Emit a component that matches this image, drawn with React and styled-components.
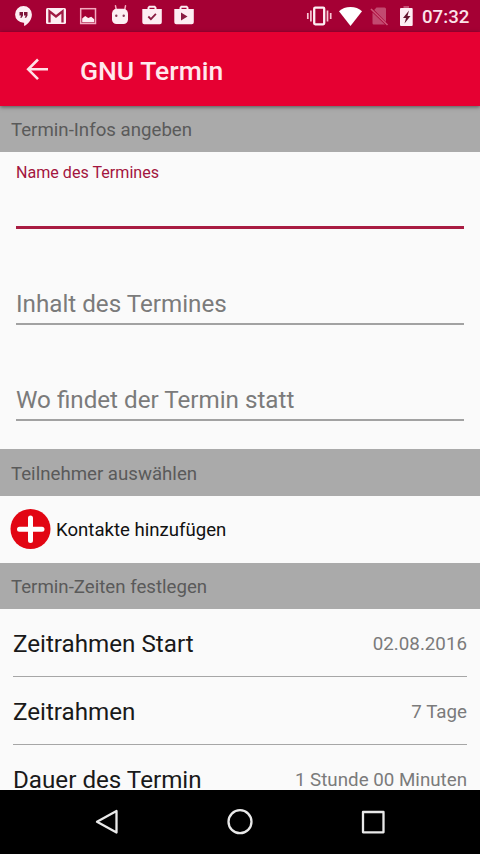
import React from "react";
import styled, { createGlobalStyle } from "styled-components";

const GlobalStyle = createGlobalStyle`
  *, *::before, *::after { box-sizing: border-box; }
  body { margin: 0; background: #000; font-family: Roboto, "Noto Sans", sans-serif; }
`;

const Screen = styled.div`
  display: flex;
  flex-direction: column;
  width: 480px;
  height: 854px;
  overflow: hidden;
  background: #fafafa;
`;

const StatusBar = styled.div`
  display: flex;
  flex: none;
  justify-content: space-between;
  height: 32px;
  padding: 0 11px 0 8px;
  background: #a50034;
`;

const IconGroup = styled.div`
  display: flex;
  align-items: center;
`;

const StatusSvg = styled.svg`
  display: block;
  flex: none;
  fill: #fdeef3;
`;

const Clock = styled.span`
  width: 47px;
  margin-left: 6px;
  padding-top: 1px;
  font-size: 18.67px;
  font-weight: 500;
  line-height: 32px;
  white-space: nowrap;
  color: #fbe3ea;
`;

const AppBar = styled.header`
  display: flex;
  flex: none;
  align-items: center;
  gap: 29px;
  height: 74px;
  padding: 0 24px;
  background: #e60032;
  box-shadow: 0 1px 4px rgba(0, 0, 0, 0.5);
  z-index: 1;
`;

const Title = styled.h1`
  margin: 0;
  padding-top: 4px;
  font-size: 26.5px;
  font-weight: 500;
  line-height: 36px;
  color: #ffe9ed;
`;

const Content = styled.main`
  flex: 1;
  min-height: 0;
  overflow: hidden;
`;

const SectionHeader = styled.h2`
  height: ${(p) => p.$height}px;
  margin: 0;
  padding: ${(p) => p.$top}px 11px 0;
  font-size: 18.67px;
  font-weight: 400;
  line-height: 24px;
  color: #5a5a5a;
  background: #aaa;
`;

const Form = styled.div`
  height: 297px;
  padding: 10px 16px 0;
`;

const Field = styled.label`
  display: flex;
  flex-direction: column;
  justify-content: ${(p) => (p.$active ? "space-between" : "flex-end")};
  height: ${(p) => p.$height}px;
  border-bottom: ${(p) => (p.$active ? "3px solid #a91c42" : "2px solid #a2a2a2")};
`;

const FloatingLabel = styled.span`
  padding-top: 1px;
  font-size: 16.1px;
  line-height: 20px;
  color: #a3153e;
`;

const Hint = styled.span`
  margin-bottom: 5px;
  font-size: 24.2px;
  line-height: 28px;
  color: #7b7b7b;
`;

const ContactRow = styled.div`
  display: flex;
  align-items: center;
  gap: 5px;
  height: 67px;
  padding: 0 10px;
  font-size: 18.6px;
  color: #111;
`;

const SettingList = styled.div`
  padding: 0 13px;
`;

const SettingRow = styled.div`
  display: flex;
  align-items: center;
  justify-content: space-between;
  height: 68px;
  padding-top: 3px;
  border-bottom: 1px solid #a6a6a6;
`;

const SettingName = styled.span`
  font-size: 24.2px;
  line-height: 32px;
  color: #191919;
`;

const SettingValue = styled.span`
  font-size: 18.75px;
  line-height: 28px;
  color: #7b7b7b;
`;

const NavBar = styled.nav`
  display: flex;
  flex: none;
  align-items: center;
  justify-content: center;
  gap: 93px;
  height: 64px;
  background: #000;
`;

const NavSvg = styled.svg`
  display: block;
  fill: none;
  stroke: #e9e9e9;
  stroke-width: 2.3;
  stroke-linejoin: round;
`;

const StatusIcon = ({ x, width = 32, children }) => (
  <StatusSvg width={width} height="32" viewBox={`${x} 0 ${width} 32`}>
    {children}
  </StatusSvg>
);

const settings = [
  ["Zeitrahmen Start", "02.08.2016"],
  ["Zeitrahmen", "7 Tage"],
  ["Dauer des Termin", "1 Stunde 00 Minuten"],
];

export default function App() {
  return (
    <Screen>
      <GlobalStyle />
      <StatusBar>
        <IconGroup>
          <StatusIcon x={8}>
            <path d="M23.5 6a8.4 8.4 0 0 0 0 16.8h.6V26c4.5-2.2 7.8-6.700 7.800-11.600A8.400 8.400 0 0 0 23.500 6z" />
            <path fill="#7d1238" d="M19.500 12h3.500v3.500l-1.300 2.300h-1.500l1-2.300h-1.700zm4.500 0h3.500v3.500l-1.300 2.300h-1.500l1-2.300H24z" />
          </StatusIcon>
          <StatusIcon x={40}>
            <rect x="46" y="8" width="20" height="16" rx="1.500" />
            <path d="M49.500 22.500V11.300l6.500 5.200 6.500-5.200v11.200" fill="none" stroke="#a11a43" strokeWidth="2.300" />
          </StatusIcon>
          <StatusIcon x={72}>
            <rect x="80.700" y="8.700" width="14.800" height="14.800" fill="none" stroke="#f3a9bf" strokeWidth="1.500" />
            <path d="M82.200 22.200v-3.700l3-2.500 3 2 3-1.200 3 2.400v3z" />
          </StatusIcon>
          <StatusIcon x={104}>
            <path d="M115.500 5.800l.8 4M125.500 5.800l-.8 4" stroke="#f3a9bf" strokeWidth="1.500" strokeLinecap="round" />
            <path d="M112 13.500a4.700 4.700 0 0 1 4.700-4.700h6.600a4.700 4.700 0 0 1 4.700 4.700v6a4.500 4.500 0 0 1-4.500 4.500h-7a4.500 4.500 0 0 1-4.500-4.500z" />
            <circle cx="116.300" cy="15.700" r="1.200" fill="#8b3a59" />
            <circle cx="123.700" cy="15.700" r="1.200" fill="#8b3a59" />
          </StatusIcon>
          <StatusIcon x={136}>
            <path fillRule="evenodd" d="M142.300 9h5.200V7.500l1.500-1.700h6l1.500 1.700V9h5.300v13.200a2 2 0 0 1-2 2h-15.500a2 2 0 0 1-2-2zM149.500 7.800V9h5V7.800z" />
            <path d="M148.300 16.500l2.600 2.600 5-5.300" fill="none" stroke="#891d43" strokeWidth="1.800" />
          </StatusIcon>
          <StatusIcon x={168}>
            <path fillRule="evenodd" d="M174.300 9h5.200V7.500l1.500-1.700h6l1.500 1.700V9h5.300v13.200a2 2 0 0 1-2 2h-15.500a2 2 0 0 1-2-2zM181.500 7.800V9h5V7.800z" />
            <path d="M181 12.500v8l6.500-4z" fill="#891d43" />
          </StatusIcon>
        </IconGroup>
        <IconGroup>
          <StatusIcon x={304}>
            <rect x="314.200" y="7.700" width="10" height="16.600" rx="1" fill="none" stroke="#fdeef3" strokeWidth="2.300" />
            <path d="M307.800 13v6M310.900 10.500v11M327.500 10.500v11M330.700 13v6" fill="none" stroke="#f8c5d3" strokeWidth="1.700" />
          </StatusIcon>
          <StatusIcon x={336} width={30}>
            <path d="M350.500 26L339 11.200c2.800-2.700 7-4.200 11.500-4.200s8.700 1.500 11.500 4.200z" fill="#fff" />
          </StatusIcon>
          <StatusIcon x={366} width={28}>
            <path d="M376.500 7.500h8a1.500 1.500 0 0 1 1.500 1.500v13L374.200 10zM372.500 12.500l12.500 12h-11.300a1.200 1.200 0 0 1-1.200-1.200z" fill="#c24a70" />
            <path d="M371 9l16.500 16" stroke="#ce577a" strokeWidth="1.600" />
          </StatusIcon>
          <StatusIcon x={394} width={22}>
            <path d="M403.500 6h5.500v2.500h-5.500z" fill="#c65075" />
            <rect x="400" y="8" width="12.700" height="18" rx="1" />
            <path d="M409 10.500l-6 7.500h3l-1.500 5.500 6-7.500h-3z" fill="#65152f" />
          </StatusIcon>
          <Clock>07:32</Clock>
        </IconGroup>
      </StatusBar>

      <AppBar>
        <svg width="27" height="28" viewBox="24 55 27 28" fill="none" stroke="#ffe0e6" strokeWidth="2.600">
          <path d="M48 69.300H28.500M38 59.500l-9.800 9.800 9.800 9.800" />
        </svg>
        <Title>GNU Termin</Title>
      </AppBar>

      <Content>
        <SectionHeader $height={46} $top={12}>Termin-Infos angeben</SectionHeader>
        <Form>
          <Field $active $height={67}>
            <FloatingLabel>Name des Termines</FloatingLabel>
          </Field>
          <Field $height={96}>
            <Hint>Inhalt des Termines</Hint>
          </Field>
          <Field $height={96}>
            <Hint>Wo findet der Termin statt</Hint>
          </Field>
        </Form>
        <SectionHeader $height={47} $top={13}>Teilnehmer auswählen</SectionHeader>
        <ContactRow>
          <svg width="41" height="41" viewBox="0 0 41 41">
            <circle cx="20.500" cy="20" r="20" fill="#e20613" />
            <path d="M20.500 9v22.500M9.500 20.200h22.500" stroke="#fff" strokeWidth="5" strokeLinecap="round" />
          </svg>
          <span>Kontakte hinzufügen</span>
        </ContactRow>
        <SectionHeader $height={46} $top={12}>Termin-Zeiten festlegen</SectionHeader>
        <SettingList>
          {settings.map(([name, value]) => (
            <SettingRow key={name}>
              <SettingName>{name}</SettingName>
              <SettingValue>{value}</SettingValue>
            </SettingRow>
          ))}
        </SettingList>
      </Content>

      <NavBar>
        <NavSvg width="40" height="40" viewBox="87 802 40 40">
          <path d="M116.500 811v21.500L97 821.800z" />
        </NavSvg>
        <NavSvg width="40" height="40" viewBox="220 802 40 40">
          <circle cx="240" cy="821.700" r="11.500" />
        </NavSvg>
        <NavSvg width="40" height="40" viewBox="353 802 40 40">
          <rect x="363" y="812" width="20.500" height="20.300" />
        </NavSvg>
      </NavBar>
    </Screen>
  );
}
